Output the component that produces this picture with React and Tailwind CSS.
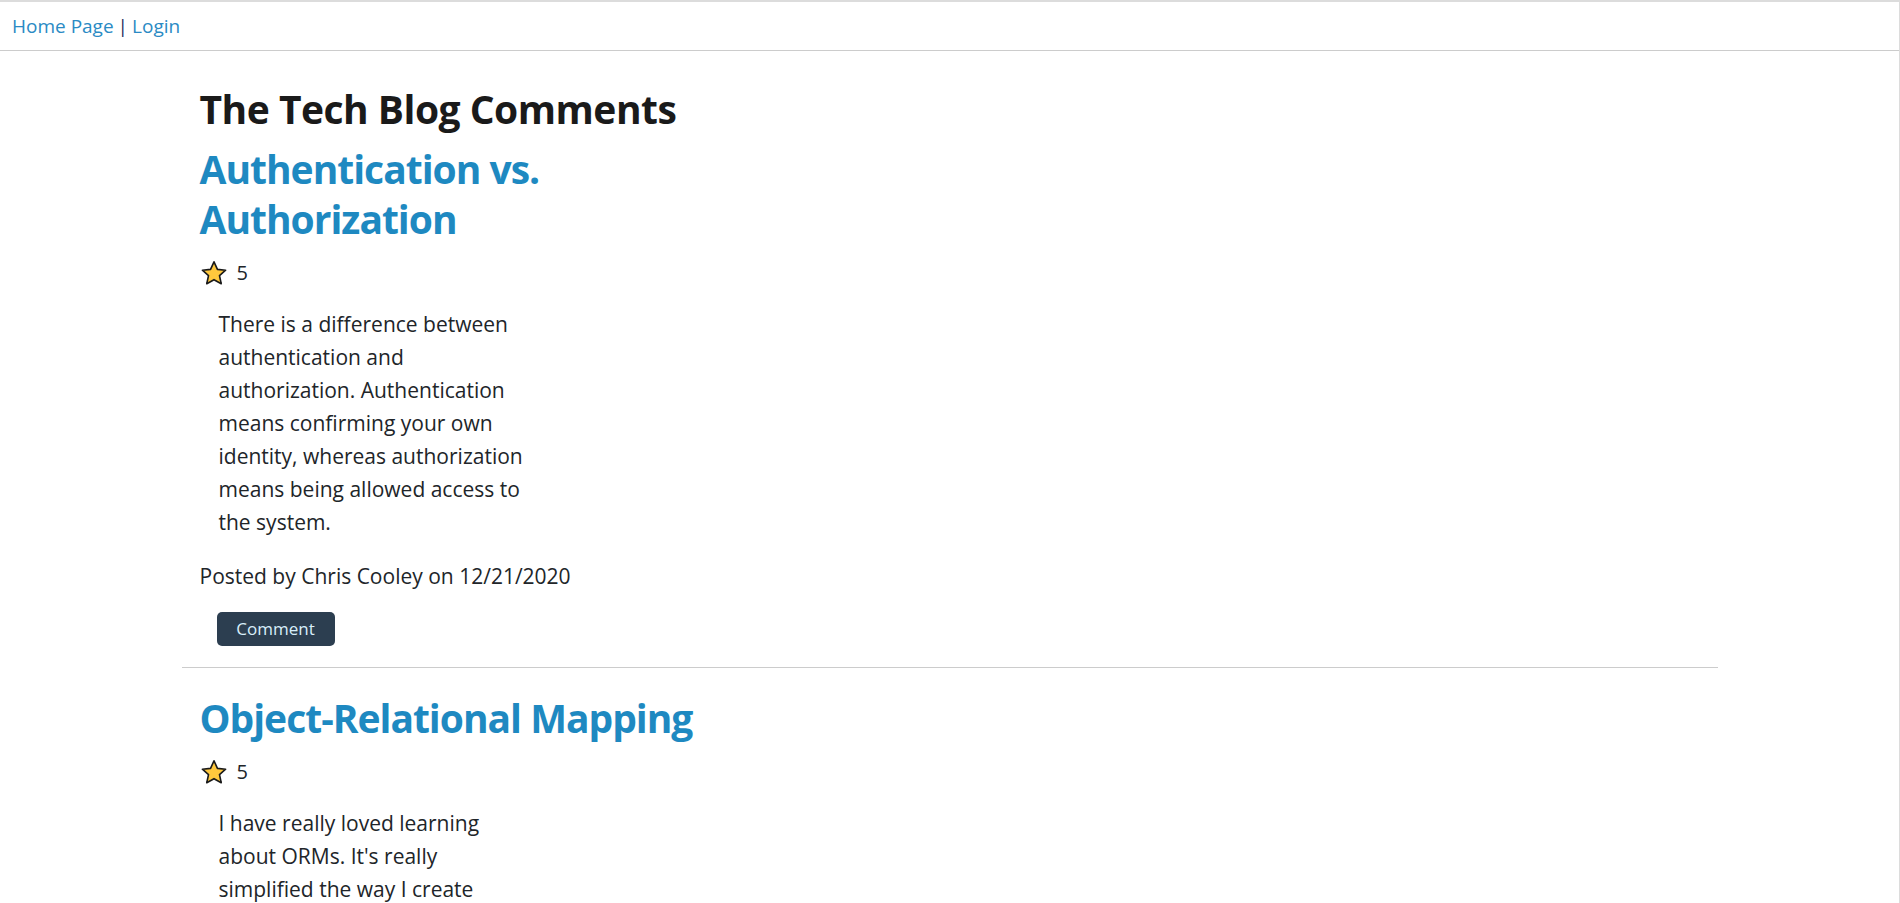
import React from 'react';

const posts = [
  {
    title: 'Authentication vs. Authorization',
    stars: 5,
    body: 'There is a difference between authentication and authorization. Authentication means confirming your own identity, whereas authorization means being allowed access to the system.',
    author: 'Chris Cooley',
    date: '12/21/2020',
  },
  {
    title: 'Object-Relational Mapping',
    stars: 5,
    body: "I have really loved learning about ORMs. It's really simplified the way I create queries in SQL!",
    author: 'Chris Cooley',
    date: '12/21/2020',
  },
];

const Star = () => (
  <svg width="28" height="26" viewBox="0 0 26 24" className="shrink-0">
    <path
      d="M13 1.6l3.2 7 7.6.8-5.7 5.1 1.6 7.5L13 18.2 6.3 22l1.6-7.5L2.2 9.4l7.6-.8z"
      fill="#FFC83D"
      stroke="#1a1a1a"
      strokeWidth="1.5"
      strokeLinejoin="round"
    />
  </svg>
);

const Post = ({ post }) => (
  <div className="px-[18px]">
    <h2 className="w-[530px] text-[39px] leading-[50px] tracking-[-1px] font-bold text-[#1e89c1] mt-[11px]">
      {post.title}
    </h2>
    {/* rating */}
    <div className="flex items-center gap-[9px] h-[28px] mt-[15px] text-[20px] text-[#212529]">
      <Star />
      <span>{post.stars}</span>
    </div>
    <p className="ml-[19px] w-[318px] mt-[21px] text-[21px] leading-[33px] text-[#212529]">
      {post.body}
    </p>
    <p className="mt-[21px] text-[21px] leading-[32px] text-[#212529]">
      Posted by {post.author} on {post.date}
    </p>
    <button className="ml-[17px] mt-[20px] w-[118px] h-[34px] rounded-[5px] bg-[#2c3e50] text-[#d8eefa] text-[17px]">
      Comment
    </button>
  </div>
);

export default function App() {
  return (
    <div
      className="min-h-screen bg-white border-t-2 border-r border-[#dcdcdc]"
      style={{ fontFamily: "'Segoe UI', 'Open Sans', sans-serif" }}
    >
      {/* top nav */}
      <nav className="h-[49px] flex items-center px-[12px] border-b border-[#cccccc] text-[19px]">
        <a className="text-[#2a8ac4]">Home Page</a>
        <span className="mx-[4px] text-[#1b2a5e]">|</span>
        <a className="text-[#2a8ac4]">Login</a>
      </nav>

      <main className="w-[1536px] mx-auto">
        <h1 className="px-[18px] pt-[34px] text-[39px] leading-[48px] tracking-[-0.5px] font-bold text-[#1a1a1a]">
          The Tech Blog Comments
        </h1>
        {posts.map((post, i) => (
          <div key={i}>
            {i > 0 && <div className="h-[14px]" />}
            <Post post={post} />
            {i === 0 && <hr className="mt-[21px] border-t border-[#cccccc]" />}
          </div>
        ))}
      </main>
    </div>
  );
}
